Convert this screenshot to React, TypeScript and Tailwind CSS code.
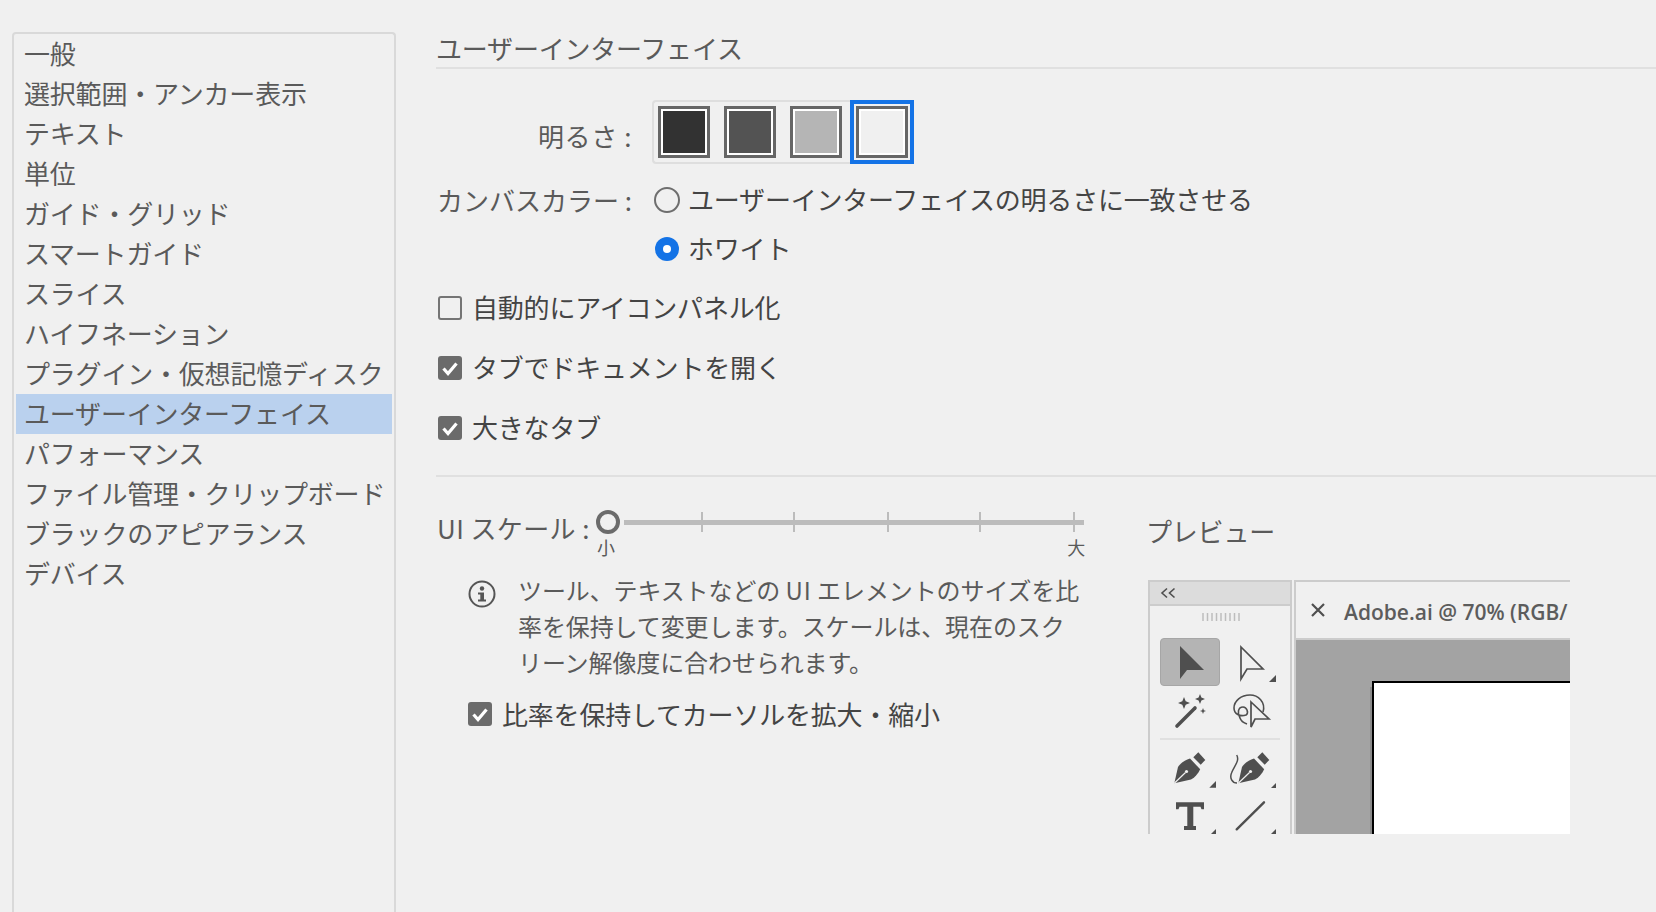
import React from "react";

const categories = [
  "一般",
  "選択範囲・アンカー表示",
  "テキスト",
  "単位",
  "ガイド・グリッド",
  "スマートガイド",
  "スライス",
  "ハイフネーション",
  "プラグイン・仮想記憶ディスク",
  "ユーザーインターフェイス",
  "パフォーマンス",
  "ファイル管理・クリップボード",
  "ブラックのアピアランス",
  "デバイス",
];

function Swatch({ fill }: { fill: string }) {
  return (
    <div className="w-[52px] h-[52px] border-[3px] border-[#666666]">
      <div className={`w-full h-full border-2 border-white ${fill}`} />
    </div>
  );
}

function CheckBox({ checked }: { checked: boolean }) {
  return checked ? (
    <div className="w-6 h-6 shrink-0 rounded-[3px] bg-[#6b6b6b]">
      <svg width="24" height="24" viewBox="0 0 24 24" fill="none">
        <path d="M5.500 12.5l4.500 5 8.500-10" stroke="#fff" strokeWidth="3.200" />
      </svg>
    </div>
  ) : (
    <div className="w-6 h-6 shrink-0 rounded-[3px] border-2 border-[#757575]" />
  );
}

function CheckRow({ label, checked }: { label: string; checked: boolean }) {
  return (
    <div className="flex items-center h-10 text-[#444444]">
      <div className="ml-[2px] mr-[10px]">
        <CheckBox checked={checked} />
      </div>
      <span className="pb-[3px]">{label}</span>
    </div>
  );
}

function CornerMark({ d }: { d: string }) {
  return <path d={d} fill="#4f4f4f" />;
}

function ToolIcon({ children }: { children: React.ReactNode }) {
  return (
    <svg width="60" height="48" viewBox="0 0 60 48" className="block">
      {children}
    </svg>
  );
}

const star = (x: number, y: number, r: number) => {
  const k = r * 0.28;
  return `M${x} ${y - r}L${x + k} ${y - k}L${x + r} ${y}L${x + k} ${y + k}L${x} ${y + r}L${x - k} ${y + k}L${x - r} ${y}L${x - k} ${y - k}Z`;
};

function PenNib({ dx = 0 }: { dx?: number }) {
  return (
    <g transform={`translate(${dx} 0)`} fill="#4f4f4f">
      <path d="M38.300 8.300L45.300 16L40.700 20.700L33.300 13.300Z" />
      <path d="M30 14.500L40.200 25.300C38 30 35 33.500 31 35.500L14.300 39.300L18 23C20 19.500 25 16 30 14.500Z" />
      <path d="M14.300 39.300L25.500 28.500" stroke="#f0f0f0" strokeWidth="1.200" />
      <circle cx="26.500" cy="27.500" r="1.600" fill="#f0f0f0" />
    </g>
  );
}

function Toolbar() {
  return (
    <div className="w-[144px] shrink-0 border-2 border-b-0 border-[#cccccc]">
      <div className="h-[24px] bg-[#dcdcdc] border-b-2 border-[#cccccc] pl-[10px] flex items-center">
        <svg width="16" height="12" viewBox="0 0 16 12" fill="none" stroke="#4f4f4f" strokeWidth="1.600">
          <path d="M7 1.500L2 6l5 4.500M14.500 1.500L9.500 6l5 4.500" />
        </svg>
      </div>
      <div className="flex justify-center pl-[2px] pt-[6px] h-[32px]">
        <svg width="40" height="10" viewBox="0 0 40 10" stroke="#bdbdbd" strokeWidth="1.500">
          <path d="M2 1v8M6.500 1v8M11 1v8M15.500 1v8M20 1v8M24.500 1v8M29 1v8M33.500 1v8M38 1v8" />
        </svg>
      </div>
      <div className="pl-[10px]">
        <div className="grid grid-cols-[60px_60px] gap-x-[2px]">
          <div className="h-12 rounded-[4px] bg-[#b4b4b4] border border-[#a6a6a6]">
            <svg width="58" height="46" viewBox="1 1 58 46" className="block">
              <path d="M20 8L44 32H27L20 41Z" fill="#4f4f4f" />
            </svg>
          </div>
          <ToolIcon>
            <path d="M19 9L41 31H25L19 41Z" fill="none" stroke="#4f4f4f" strokeWidth="1.700" />
            <CornerMark d="M47 44L54 37V44Z" />
          </ToolIcon>
          <div className="mt-[2px]">
            <ToolIcon>
              <path d="M17 38L35 20" stroke="#4f4f4f" strokeWidth="3.600" strokeLinecap="round" />
              <path d={star(24, 15, 6)} fill="#4f4f4f" />
              <path d={star(40, 11, 5)} fill="#4f4f4f" />
              <path d={star(43, 23, 3)} fill="#4f4f4f" />
            </ToolIcon>
          </div>
          <div className="mt-[2px]">
            <ToolIcon>
              <path
                d="M41 24C44 14 36 7 28 7C19 7 12 13 12 20C12 26 18 29 24 27C27 25 25 19 21 19C16 19 15 25 18 30C19 33 22 35 25 36"
                fill="none"
                stroke="#4f4f4f"
                strokeWidth="1.600"
              />
              <path d="M29 14L47 31H33L29 39Z" fill="#f0f0f0" stroke="#4f4f4f" strokeWidth="1.700" />
            </ToolIcon>
          </div>
        </div>
        <div className="w-[120px] h-[2px] bg-[#e0e0e0] mt-[2px] mb-[4px]" />
        <div className="grid grid-cols-[60px_60px] gap-x-[2px]">
          <ToolIcon>
            <PenNib />
            <CornerMark d="M49.300 43.700L56 37V43.700Z" />
          </ToolIcon>
          <ToolIcon>
            <PenNib dx={2} />
            <path d="M14.700 11C18 17 12 22 9.500 29C7.500 34 10 39 15 39" fill="none" stroke="#4f4f4f" strokeWidth="1.500" />
            <CornerMark d="M49 44L54 39V44Z" />
          </ToolIcon>
          <ToolIcon>
            <path
              d="M16 10.300H44V17.300H41.500L40.500 14.700H33.300V34H36V38H24V34H27.300V14.700H19.500L18.500 17.300H16Z"
              fill="#4f4f4f"
            />
            <CornerMark d="M51 42L56 37V42Z" />
          </ToolIcon>
          <ToolIcon>
            <path d="M14.700 37.300L42 10.300" stroke="#4f4f4f" strokeWidth="2.400" strokeLinecap="round" />
            <CornerMark d="M49 42L54 37V42Z" />
          </ToolIcon>
        </div>
      </div>
    </div>
  );
}

function DocumentView() {
  return (
    <div className="w-[276px] shrink-0 flex flex-col border-l-2 border-t-2 border-[#cccccc] overflow-hidden">
      <div className="h-[58px] shrink-0 flex items-center pl-[14px] gap-[18px] border-b-2 border-[#cccccc] whitespace-nowrap">
        <svg width="16" height="16" viewBox="0 0 16 16" stroke="#4f4f4f" strokeWidth="2.200" className="shrink-0">
          <path d="M2 2l12 12M14 2L2 14" />
        </svg>
        <span className="pt-[6px] font-['Open_Sans',sans-serif] font-semibold text-[21px] tracking-normal text-[#5c5c5c]">
          Adobe.ai @ 70% (RGB/
        </span>
      </div>
      <div className="flex-1 bg-[#a3a3a3] pt-[41px] pl-[76px]">
        <div className="h-full bg-white border-t-2 border-l-2 border-black shadow-[-2px_6px_0_#8a8a8a]" />
      </div>
    </div>
  );
}

function App() {
  return (
    <div className="w-[1656px] h-[912px] flex overflow-hidden bg-[#f0f0f0] text-[26px] tracking-[-0.2px] text-[#5a5a5a] font-['Noto_Sans_CJK_JP',sans-serif] font-normal">
      <div className="ml-[12px] mt-[32px] w-[384px] shrink-0 border-2 border-b-0 border-[#d9d9d9] rounded-t-[4px]">
        {categories.map((name, i) => (
          <div
            key={name}
            className={`h-10 ml-[2px] mr-[2px] pl-[8px] leading-[38px] whitespace-nowrap ${
              i === 9 ? "bg-[#bad1ee]" : ""
            }`}
          >
            {name}
          </div>
        ))}
      </div>

      <div className="ml-10 flex-1 min-w-0">
        <div className="h-[69px] pt-[29px] leading-[38px] border-b-2 border-[#e0e0e0]">
          ユーザーインターフェイス
        </div>

        <div className="mt-[31px] flex items-center">
          <div className="w-[196px] text-right mr-[20px] pt-[6px] tracking-[0.6px]">明るさ :</div>
          <div className="w-[198px] h-16 flex items-center pl-[4px] gap-[14px] border-2 border-r-0 border-[#dedede] rounded-l-[4px]">
            <Swatch fill="bg-[#323232]" />
            <Swatch fill="bg-[#535353]" />
            <Swatch fill="bg-[#b5b5b5]" />
          </div>
          <div className="w-16 h-16 border-4 border-[#1473e6] p-[2px]">
            <Swatch fill="bg-[#f0f0f0]" />
          </div>
        </div>

        <div className="mt-4 flex items-center h-10">
          <div className="w-[196px] text-right mr-[22px] pb-[2px] tracking-normal whitespace-nowrap">カンバスカラー :</div>
          <div className="w-[26px] h-[26px] rounded-full border-2 border-[#6e6e6e]" />
          <div className="ml-2 pb-[4px] text-[#444444]">ユーザーインターフェイスの明るさに一致させる</div>
        </div>
        <div className="mt-[9px] flex items-center h-10 pl-[219px]">
          <div className="w-6 h-6 rounded-full bg-[#1473e6] flex items-center justify-center">
            <div className="w-2 h-2 rounded-full bg-white" />
          </div>
          <div className="ml-[9px] pb-[4px] text-[#444444]">ホワイト</div>
        </div>

        <div className="mt-[19px] flex flex-col gap-5">
          <CheckRow label="自動的にアイコンパネル化" checked={false} />
          <CheckRow label="タブでドキュメントを開く" checked />
          <CheckRow label="大きなタブ" checked />
        </div>

        <div className="mt-[27px] h-[2px] bg-[#e0e0e0]" />

        <div className="flex">
          <div className="w-[712px] shrink-0">
            <div className="flex items-start">
              <div className="w-40 shrink-0 mt-[31px] h-10 leading-[40px] pl-[1px] tracking-[0.4px] whitespace-nowrap">UI スケール :</div>
              <div className="w-[490px] mt-[33px]">
                <div className="relative flex items-center h-6">
                  <div className="w-6 h-6 shrink-0 rounded-full border-4 border-[#6b6b6b]" />
                  <div className="absolute left-[28px] w-[460px] h-[5px] bg-[#bcbcbc]" />
                  <div className="ml-[81px] w-[2px] h-5 bg-[#bcbcbc]" />
                  <div className="ml-[90px] w-[2px] h-5 bg-[#bcbcbc]" />
                  <div className="ml-[92px] w-[2px] h-5 bg-[#bcbcbc]" />
                  <div className="ml-[90px] w-[2px] h-5 bg-[#bcbcbc]" />
                  <div className="ml-[92px] w-[2px] h-5 bg-[#bcbcbc]" />
                </div>
                <div className="flex justify-between text-[18px] leading-[26px] pl-[1px] pr-[1px]">
                  <span>小</span>
                  <span>大</span>
                </div>
              </div>
            </div>

            <div className="mt-3 ml-8 flex">
              <svg width="28" height="28" viewBox="0 0 28 28" fill="none" className="mt-2 shrink-0">
                <circle cx="14" cy="14" r="12.500" stroke="#555" strokeWidth="2" />
                <circle cx="14" cy="8.500" r="2.200" fill="#555" />
                <path d="M10 12.500H16V19.500H18V21.500H10V19.500H12.300V14.500H10Z" fill="#555" />
              </svg>
              <div className="ml-[22px] text-[24px] tracking-[-0.1px] leading-[36px] whitespace-nowrap">
                ツール、テキストなどの <span className="tracking-[1px]">UI</span> エレメントのサイズを比
                <br />
                率を保持して変更します。スケールは、現在のスク
                <br />
                リーン解像度に合わせられます。
              </div>
            </div>

            <div className="mt-[14px] ml-8 flex items-center h-10 text-[#444444]">
              <CheckBox checked />
              <span className="ml-[10px] pb-[2px]">比率を保持してカーソルを拡大・縮小</span>
            </div>
          </div>

          <div>
            <div className="mt-[34px] -ml-[2px] h-10 leading-[40px]">プレビュー</div>
            <div className="mt-[29px] h-[254px] flex gap-[2px] overflow-hidden">
              <Toolbar />
              <DocumentView />
            </div>
          </div>
        </div>
      </div>
    </div>
  );
}

export default App;
